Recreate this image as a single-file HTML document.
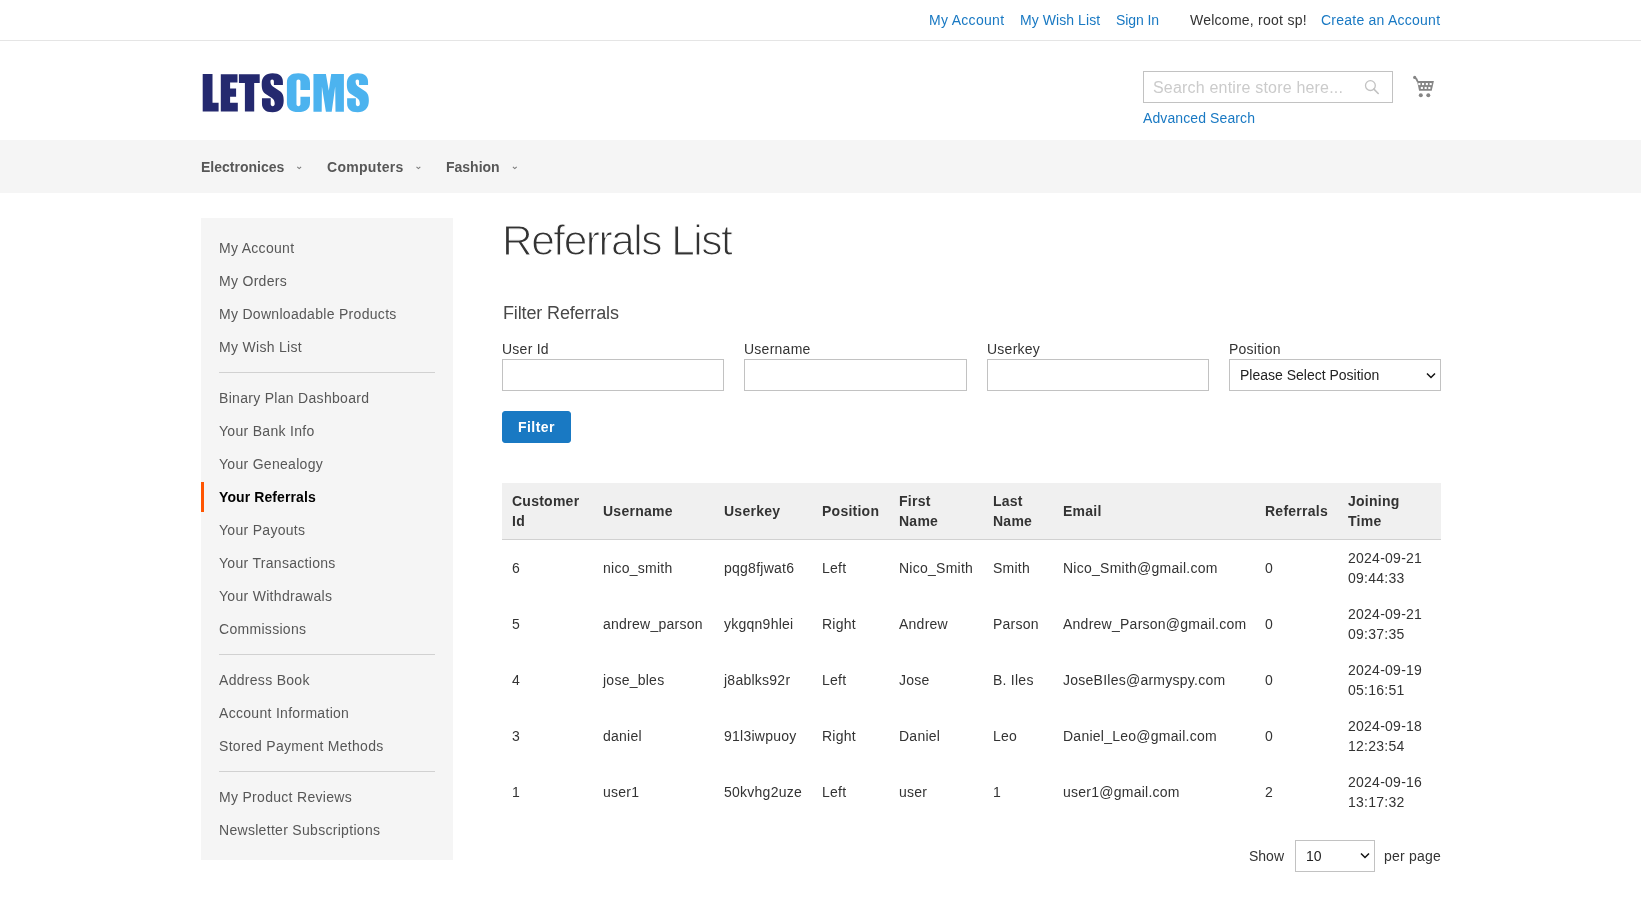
<!DOCTYPE html>
<html><head><meta charset="utf-8"><title>Referrals List</title>
<style>
*{box-sizing:border-box;margin:0;padding:0}
html,body{width:1641px;height:905px;overflow:hidden;background:#fff}
body{font-family:"Liberation Sans",sans-serif;font-size:14px;line-height:20px;color:#333;position:relative}
.a{position:absolute;white-space:nowrap}
.lk{color:#1979c3}
.panel{position:absolute;left:0;top:0;width:1641px;height:41px;border-bottom:1px solid #e5e5e5}
.nav{position:absolute;left:0;top:140px;width:1641px;height:53px;background:#f5f5f5}
.nav .a{font-weight:bold;color:#575757}
.chev{position:absolute;width:3.5px;height:3.5px;border-right:1px solid #9a9a9a;border-bottom:1px solid #9a9a9a;transform:rotate(45deg)}
.side{position:absolute;left:201px;top:218px;width:252px;height:642px;background:#f5f5f5}
.side .a{color:#575757;left:18px;letter-spacing:0.3px}
.side .sep{position:absolute;left:18px;width:216px;height:1px;background:#d1d1d1}
.inp{position:absolute;height:32px;border:1px solid #c2c2c2;background:#fff}
.btn{position:absolute;left:502px;top:411px;width:69px;height:32px;background:#1979c3;border:1px solid #1979c3;border-radius:3px}
.thead{position:absolute;left:502px;top:483px;width:939px;height:57px;background:#f0f0f0;border-bottom:1px solid #d1d1d1}
.th{font-weight:bold;color:#333;letter-spacing:0.25px}
.td{color:#333;letter-spacing:0.25px}
.lb{letter-spacing:0.25px}
#root{position:absolute;left:0;top:0;width:1641px;height:905px;will-change:transform}
.tbl{position:absolute;left:502px;top:483px;width:939px;border-collapse:collapse;table-layout:fixed}
.tbl th{background:#f0f0f0;border-bottom:1px solid #d1d1d1;font-weight:bold;text-align:left;vertical-align:middle;padding:8px 0 8px 10px;line-height:20px;letter-spacing:0.25px;white-space:nowrap}
.tbl td{vertical-align:middle;padding:8px 0 8px 10px;line-height:20px;height:56px;letter-spacing:0.25px;white-space:nowrap}
</style></head><body>
<div id="root">

<!-- top panel -->
<div class="panel"></div>
<div class="a lk" style="left:929px;top:10px;letter-spacing:0.3px">My Account</div>
<div class="a lk" style="left:1020px;top:10px;letter-spacing:0.07px">My Wish List</div>
<div class="a lk" style="left:1116px;top:10px;letter-spacing:-0.1px">Sign In</div>
<div class="a" style="left:1190px;top:10px;letter-spacing:0.25px">Welcome, root sp!</div>
<div class="a lk" style="left:1321px;top:10px;letter-spacing:0.24px">Create an Account</div>

<!-- logo -->
<svg class="a" style="left:0;top:0" width="400" height="130" viewBox="0 0 400 130">
<g fill="#24296f">
<path d="M202.7 74H212.5V102.8H218.6V111.6H202.7Z"/>
<path d="M220.8 74.3H237.5V82.5H230.1V88.6H236.1V96.8H230.1V102.8H237.8V111.6H220.8Z"/>
<path d="M238.9 74.3H259.7V83H254.2V111.6H244.9V83H238.9Z"/>
<g transform="matrix(0.05302,0,0,0.05302,224.85,68)"><path id="S" d="M900,100 C1030,100 1095,160 1095,260 V320 H925 V255 C925,230 915,215 893,215 C870,215 860,232 860,258 C860,300 880,335 920,360 L1040,440 C1095,480 1110,530 1110,620 C1110,760 1030,835 900,835 C760,835 700,770 700,670 V570 H865 V680 C865,705 880,720 902,720 C925,720 940,705 940,675 C940,620 925,590 880,560 L770,490 C720,455 695,410 695,300 C695,170 770,100 900,100Z"/></g>
</g>
<g fill="#4cb3ef">
<g transform="matrix(0.05305,0,0,0.05305,258,68)"><path d="M760,100 C900,100 980,160 980,280 V415 H800 V260 C800,230 785,215 762,215 C740,215 725,230 725,260 V680 C725,705 740,720 762,720 C785,720 800,705 800,680 V540 H980 V650 C980,770 900,830 760,830 C620,830 545,770 545,650 V280 C545,160 620,100 760,100Z"/></g>
<path d="M313.45 74.1H325.9L328.8 90.8L331.2 74.1H343.9V111.7H335.5L335.2 86.6L331.7 111.7H325.9L321.9 86.6L321.7 111.7H313.45Z"/>
<g transform="matrix(0.05302,0,0,0.05302,310,68)"><path d="M900,100 C1030,100 1095,160 1095,260 V320 H925 V255 C925,230 915,215 893,215 C870,215 860,232 860,258 C860,300 880,335 920,360 L1040,440 C1095,480 1110,530 1110,620 C1110,760 1030,835 900,835 C760,835 700,770 700,670 V570 H865 V680 C865,705 880,720 902,720 C925,720 940,705 940,675 C940,620 925,590 880,560 L770,490 C720,455 695,410 695,300 C695,170 770,100 900,100Z"/></g>
</g>
</svg>

<!-- search -->
<div class="inp" style="left:1143px;top:71px;width:250px"></div>
<div class="a" style="left:1153px;top:78px;font-size:16px;color:#cbcbcb;letter-spacing:0.19px">Search entire store here...</div>
<svg class="a" style="left:1360px;top:75px" width="24" height="24" viewBox="0 0 24 24"><circle cx="10.4" cy="10.6" r="4.9" fill="none" stroke="#c2c2c2" stroke-width="1.3"/><path d="M13.9 14.1L18.2 18.5" stroke="#c2c2c2" stroke-width="1.6" stroke-linecap="round"/></svg>
<div class="a lk" style="left:1143px;top:108px;letter-spacing:0.1px">Advanced Search</div>
<svg class="a" style="left:1405px;top:70px" width="40" height="32" viewBox="0 0 40 32"><g fill="#858585"><circle cx="9.7" cy="7.4" r="1.6"/><path d="M9.8 7.6Q11.9 8.4 12.6 11.6" fill="none" stroke="#858585" stroke-width="1.9"/><path d="M12 11H28.9L26.7 20.7H14.1Z"/></g><g fill="#fff"><rect x="13.3" y="13" width="2.1" height="2.1"/><rect x="17" y="13" width="2.1" height="2.1"/><rect x="20.8" y="13" width="2.1" height="2.1"/><rect x="24.6" y="13" width="2.1" height="2.1"/><rect x="15.8" y="16.9" width="2.1" height="2.1"/><rect x="19.6" y="16.9" width="2.1" height="2.1"/><rect x="23.3" y="16.9" width="2.1" height="2.1"/></g><g fill="#858585"><circle cx="15.8" cy="25.2" r="2"/><circle cx="23.3" cy="25.2" r="2"/></g></svg>

<!-- nav -->
<div class="nav">
<div class="a" style="left:201px;top:17px">Electronices</div>
<svg class="a" style="left:295px;top:25px" width="8" height="6"><path d="M2.3 1.9L4.2 3.6L6.1 1.9" stroke="#7a7a7a" stroke-width="1.1" fill="none"/></svg>
<div class="a" style="left:327px;top:17px;letter-spacing:0.3px">Computers</div>
<svg class="a" style="left:414px;top:25px" width="8" height="6"><path d="M2.5 1.9L4.4 3.6L6.3 1.9" stroke="#7a7a7a" stroke-width="1.1" fill="none"/></svg>
<div class="a" style="left:446px;top:17px">Fashion</div>
<svg class="a" style="left:510px;top:25px" width="8" height="6"><path d="M2.9 1.9L4.8 3.6L6.7 1.9" stroke="#7a7a7a" stroke-width="1.1" fill="none"/></svg>
</div>

<!-- sidebar -->
<div class="side">
<div class="a" style="top:20px">My Account</div>
<div class="a" style="top:53px">My Orders</div>
<div class="a" style="top:86px">My Downloadable Products</div>
<div class="a" style="top:119px">My Wish List</div>
<div class="sep" style="top:154px"></div>
<div class="a" style="top:170px">Binary Plan Dashboard</div>
<div class="a" style="top:203px">Your Bank Info</div>
<div class="a" style="top:236px">Your Genealogy</div>
<div style="position:absolute;left:0;top:264px;width:3px;height:30px;background:#ff5501"></div>
<div class="a" style="top:269px;color:#000;font-weight:bold;letter-spacing:0.1px">Your Referrals</div>
<div class="a" style="top:302px">Your Payouts</div>
<div class="a" style="top:335px">Your Transactions</div>
<div class="a" style="top:368px">Your Withdrawals</div>
<div class="a" style="top:401px">Commissions</div>
<div class="sep" style="top:436px"></div>
<div class="a" style="top:452px">Address Book</div>
<div class="a" style="top:485px">Account Information</div>
<div class="a" style="top:518px">Stored Payment Methods</div>
<div class="sep" style="top:553px"></div>
<div class="a" style="top:569px">My Product Reviews</div>
<div class="a" style="top:602px">Newsletter Subscriptions</div>
</div>

<!-- main -->
<div class="a" style="left:502px;top:217px;font-size:42.5px;line-height:48px;letter-spacing:-1.5px;color:#333;-webkit-text-stroke:1.2px #fff">Referrals List</div>
<div class="a" style="left:503px;top:301px;font-size:18px;line-height:24px;letter-spacing:-0.14px;color:#484848">Filter Referrals</div>

<div class="a lb" style="left:502px;top:339px">User Id</div>
<div class="a lb" style="left:744px;top:339px">Username</div>
<div class="a lb" style="left:987px;top:339px">Userkey</div>
<div class="a lb" style="left:1229px;top:339px">Position</div>
<div class="inp" style="left:502px;top:359px;width:222px"></div>
<div class="inp" style="left:744px;top:359px;width:223px"></div>
<div class="inp" style="left:987px;top:359px;width:222px"></div>
<div class="inp" style="left:1229px;top:359px;width:212px"></div>
<div class="a" style="left:1240px;top:365px;color:#222">Please Select Position</div>
<svg class="a" style="left:1424px;top:369px" width="14" height="14" viewBox="0 0 14 14"><path d="M3 4.5L7 8.5L11 4.5" fill="none" stroke="#111" stroke-width="1.5"/></svg>

<div class="btn"></div>
<div class="a" style="left:518px;top:417px;color:#fff;font-weight:bold;letter-spacing:0.45px">Filter</div>

<table class="tbl"><colgroup><col style="width:91px"><col style="width:121px"><col style="width:98px"><col style="width:77px"><col style="width:94px"><col style="width:70px"><col style="width:202px"><col style="width:83px"><col style="width:103px"></colgroup>
<thead><tr><th>Customer<br>Id</th><th>Username</th><th>Userkey</th><th>Position</th><th>First<br>Name</th><th>Last<br>Name</th><th>Email</th><th>Referrals</th><th>Joining<br>Time</th></tr></thead><tbody>
<tr><td>6</td><td>nico_smith</td><td>pqg8fjwat6</td><td>Left</td><td>Nico_Smith</td><td>Smith</td><td>Nico_Smith@gmail.com</td><td>0</td><td>2024-09-21<br>09:44:33</td></tr>
<tr><td>5</td><td>andrew_parson</td><td>ykgqn9hlei</td><td>Right</td><td>Andrew</td><td>Parson</td><td>Andrew_Parson@gmail.com</td><td>0</td><td>2024-09-21<br>09:37:35</td></tr>
<tr><td>4</td><td>jose_bles</td><td>j8ablks92r</td><td>Left</td><td>Jose</td><td>B. Iles</td><td>JoseBIles@armyspy.com</td><td>0</td><td>2024-09-19<br>05:16:51</td></tr>
<tr><td>3</td><td>daniel</td><td>91l3iwpuoy</td><td>Right</td><td>Daniel</td><td>Leo</td><td>Daniel_Leo@gmail.com</td><td>0</td><td>2024-09-18<br>12:23:54</td></tr>
<tr><td>1</td><td>user1</td><td>50kvhg2uze</td><td>Left</td><td>user</td><td>1</td><td>user1@gmail.com</td><td>2</td><td>2024-09-16<br>13:17:32</td></tr>
</tbody></table>

<div class="a" style="left:1249px;top:846px">Show</div>
<div class="inp" style="left:1295px;top:840px;width:80px"></div>
<div class="a" style="left:1306px;top:846px;color:#222">10</div>
<svg class="a" style="left:1358px;top:849px" width="14" height="14" viewBox="0 0 14 14"><path d="M3 4.5L7 8.5L11 4.5" fill="none" stroke="#111" stroke-width="1.5"/></svg>
<div class="a" style="left:1384px;top:846px;letter-spacing:0.2px">per page</div>
</div>
</body></html>
